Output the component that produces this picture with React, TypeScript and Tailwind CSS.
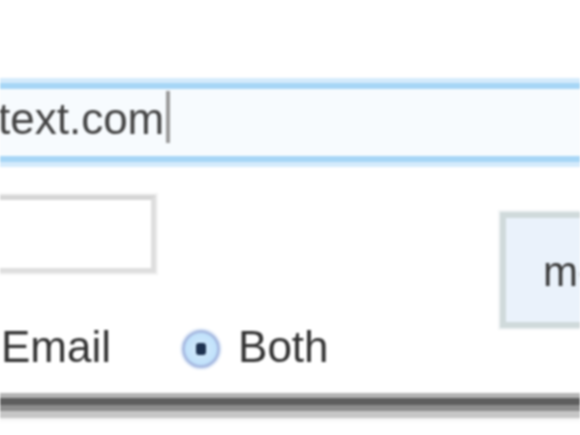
export default function App() {
  return (
    <div className="w-[580px] h-[435px] overflow-hidden bg-white font-['Liberation_Sans',Arial,sans-serif] text-[#333] blur-[0.8px]">
      {/* focused email field, scrolled to the end */}
      <div className="mt-[83px] -ml-[30px] w-[650px] h-[79px] border-[6px] border-[#a7d6f6] bg-[#f7fbfe] shadow-[0_0_0_5px_#d5ebfc] overflow-hidden">
        <div className="flex items-start pt-[2px] pl-[22px]">
          <span className="text-[44px] leading-[44px] mt-[6px] text-[#444]">text.com</span>
          <span className="w-[4px] h-[52px] bg-[#9a9a9a] ml-[2px]" />
        </div>
      </div>

      <div className="flex">
        <div className="flex flex-col">
          <div className="mt-[33px] -ml-[20px] w-[176px] h-[78px] border-[5px] border-[#dedede] border-t-[#d6d6d6] bg-white shadow-[0_0_0_2px_#f3f3f3]" />
          <div className="flex items-center mt-[52px] h-[44px] text-[44px] leading-[44px] text-[#333]">
            <span className="ml-[1px]">Email</span>
            <span className="ml-[71px] w-[38px] h-[38px] rounded-full border-[3px] border-[#a9bce2] bg-[radial-gradient(circle,#d6ecfd_0%,#b6dcf9_100%)] shadow-[0_0_0_2px_#e6eef9] flex items-center justify-center mt-[4px]">
              <span className="w-[10px] h-[12px] rounded-[3px] bg-[#1d3250]" />
            </span>
            <span className="ml-[18px]">Both</span>
          </div>
        </div>
        <div className="ml-auto mt-[50px] -mr-[40px] w-[120px] h-[116px] border-[6px] border-[#d0dadb] bg-[#eaf2fb] shadow-[0_0_0_2px_#f1f4f5] pl-[37px] pt-[33px] text-[42px] leading-[42px] text-[#3c3c3c]">
          more
        </div>
      </div>

      <div className="mt-[24px] h-[30px] bg-[linear-gradient(to_bottom,#b4b4b4_0px,#b4b4b4_5px,#5e5e5e_5px,#5e5e5e_12px,#8d8d8d_12px,#8d8d8d_18px,#c6c6c6_18px,#c6c6c6_25px,#f2f2f2_25px,#ffffff_30px)]" />
    </div>
  );
}
